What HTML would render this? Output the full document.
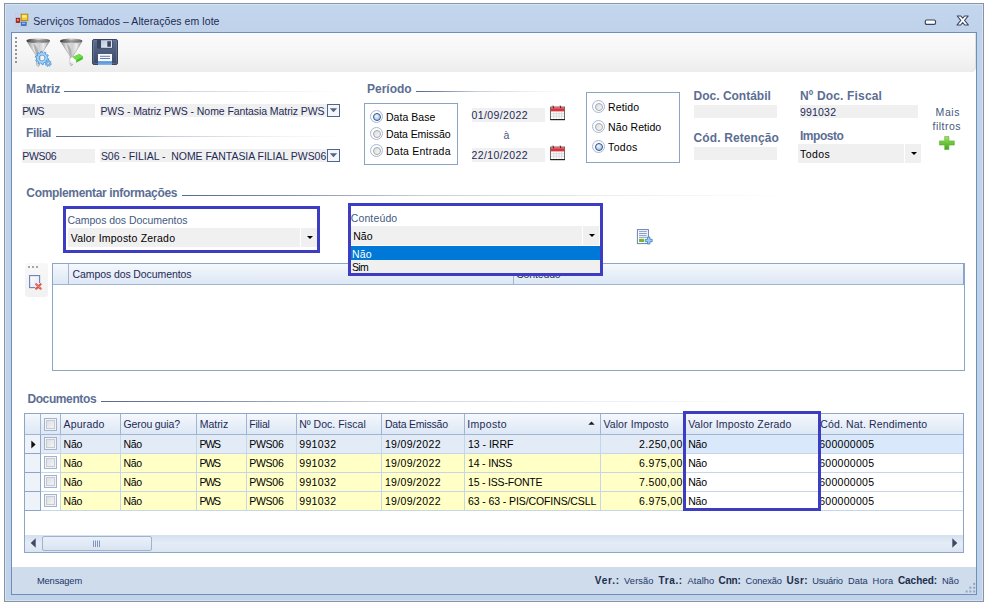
<!DOCTYPE html>
<html lang="pt-BR">
<head>
<meta charset="utf-8">
<title>Serviços Tomados – Alterações em lote</title>
<style>
html,body{margin:0;padding:0;}
body{width:986px;height:610px;background:#fff;position:relative;overflow:hidden;
 font-family:"Liberation Sans",sans-serif;font-size:10.5px;color:#000;}
div,span,svg{position:absolute;box-sizing:border-box;}
span{white-space:nowrap;line-height:14px;height:14px;}
.win{left:4px;top:3px;width:980px;height:599px;background:linear-gradient(#c4d6ed,#bfd2ea 28px,#c1d3eb 29px);border:1px solid #8893a5;box-shadow:inset 1px 1px 0 #d6e3f3,inset -1px -1px 0 #d6e3f3;}
.client{left:11px;top:32px;width:966px;height:563px;background:#fff;border:1px solid #6f8db8;}
.tb{left:12px;top:33px;width:964px;height:39px;background:linear-gradient(#fbfbfb,#f6f6f6 50%,#ededed);border-radius:0 0 5px 0;box-shadow:inset -1px 0 0 #e0e0e0;}
.hd{font-weight:bold;color:#5c6e93;font-size:12px;}
.ln{height:1px;background:linear-gradient(90deg,#566a8c,rgba(86,106,140,0.8) 15%,rgba(86,106,140,0.32) 40%,rgba(86,106,140,0.12) 70%,rgba(86,106,140,0));}
.fld{background:#f0f0f0;}
.lbl{color:#44597f;}
.gb{border:1px solid #8ba3c4;background:#fff;}
.rad{width:13px;height:13px;border-radius:50%;border:1px solid #a4b9d8;background:#fdfdfe;}
.rad::after{content:"";position:absolute;left:1.5px;top:1.5px;width:8px;height:8px;border-radius:50%;border:1px solid #a6a8ac;background:linear-gradient(135deg,#dcdcdc,#f9f9f9);box-sizing:border-box;}
.rad.on::after{border:1.5px solid #35518a;background:radial-gradient(circle at 40% 35%,#f2f7fd,#8db3e4);}
.hl{border:3px solid #3d3dc3;}
.arr{width:0;height:0;border-left:3px solid transparent;border-right:3px solid transparent;border-top:3px solid #000;}
.grid{border:1px solid #8da5c6;background:#fff;}
.gh{background:linear-gradient(#f6f9fd,#e9f0f9 45%,#dde8f5);border-bottom:1px solid #9fb5d3;}
.vs{width:1px;background:#a9bddb;}
.hs{height:1px;background:#c5d5ea;}
.st{font-size:9.3px;color:#213567;}
.st b{font-weight:bold;color:#1c2c4a;font-size:10px;}
</style>
</head>
<body>
<div class="win"></div>
<div class="client"></div>
<div class="tb"></div>

<!-- title -->
<span id="title" style="left:33.3px;top:14px;font-size:10.5px;color:#1e2a55;letter-spacing:0.07px;">Serviços Tomados – Alterações em lote</span>


<!-- title icon -->
<svg style="left:15px;top:13px" width="14" height="14" viewBox="0 0 14 14">
 <path d="M0.5 0.5 H13.5 V13.5 H0.5 Z M5.5 0.5 V13.5 M0.5 9.5 H13.5 M3 9.5 V13.5" fill="none" stroke="#c4c8cf" stroke-width="0.7"/>
 <rect x="1.2" y="5.2" width="3.6" height="4.4" fill="#c3241c" stroke="#8a1a14" stroke-width="0.7"/>
 <rect x="2.3" y="6" width="1.2" height="2" fill="#f5b5ad"/>
 <rect x="6.2" y="1.2" width="6.6" height="6.3" fill="#f7c91d" stroke="#b5860a" stroke-width="0.9"/>
 <rect x="7.2" y="2.2" width="4.4" height="2.4" fill="#fdeb95"/>
 <rect x="6.2" y="9" width="5" height="3.6" fill="#3b7bdc" stroke="#2a5cb0" stroke-width="0.6"/>
 <rect x="7" y="9.7" width="3.2" height="1.2" fill="#9ec2f5"/>
</svg>
<!-- window buttons -->
<svg style="left:924px;top:19px" width="13" height="7" viewBox="0 0 13 7"><rect x="1.3" y="1" width="10.2" height="4.4" rx="1.4" fill="#fff" stroke="#3b4561" stroke-width="1.2"/></svg>
<svg style="left:956px;top:15px" width="14" height="12" viewBox="0 0 14 12"><path d="M1.2 1 L4.8 1 L6.7 3.2 L8.6 1 L12.2 1 L8.6 5.3 L12.4 10 L8.7 10 L6.7 7.5 L4.7 10 L1 10 L4.8 5.3 Z" fill="#fff" stroke="#3b4561" stroke-width="1.1" stroke-linejoin="round"/></svg>

<!-- toolbar icons -->
<svg style="left:12px;top:33px" width="112" height="38" viewBox="12 33 112 38">
 <defs>
  <linearGradient id="fg" x1="0" x2="1"><stop offset="0" stop-color="#8f8f8f"/><stop offset="0.3" stop-color="#e2e2e2"/><stop offset="0.55" stop-color="#cfcfcf"/><stop offset="0.75" stop-color="#ececec"/><stop offset="1" stop-color="#909090"/></linearGradient>
  <linearGradient id="fe" x1="0" x2="1"><stop offset="0" stop-color="#2f2f2f"/><stop offset="0.3" stop-color="#8a8a8a"/><stop offset="0.5" stop-color="#cfcfcf"/><stop offset="0.8" stop-color="#8e8e8e"/><stop offset="1" stop-color="#555"/></linearGradient>
  <linearGradient id="sv" x1="0" y1="0" x2="0" y2="1"><stop offset="0" stop-color="#5d6c8c"/><stop offset="1" stop-color="#3d4a69"/></linearGradient>
  <linearGradient id="sh" x1="0" y1="0" x2="1" y2="1"><stop offset="0" stop-color="#b9c5dc"/><stop offset="1" stop-color="#eef2f8"/></linearGradient>
  <linearGradient id="sb" x1="0" y1="0" x2="0" y2="1"><stop offset="0" stop-color="#4a8ad2"/><stop offset="1" stop-color="#77b4ec"/></linearGradient>
 </defs>
 <g fill="#90969e"><rect x="15" y="37" width="2" height="2"/><rect x="15" y="41" width="2" height="2"/><rect x="15" y="45" width="2" height="2"/><rect x="15" y="49" width="2" height="2"/><rect x="15" y="53" width="2" height="2"/><rect x="15" y="57" width="2" height="2"/><rect x="15" y="61" width="2" height="2"/></g>
 <!-- funnel 1 -->
 <path d="M27 41.5 L49.5 41.5 L40 56 L40 63 Q39.5 66.5 38 66.5 Q36.5 66 36.5 63 L36.5 56 Z" fill="url(#fg)" stroke="#8a8a8a" stroke-width="0.5"/>
 <path d="M33 43 Q39 47 38.5 57 L37 57 Z" fill="#a5a5a5" opacity="0.8"/>
 <ellipse cx="38.2" cy="40.8" rx="11.9" ry="2.4" fill="url(#fe)"/>
 <ellipse cx="38.4" cy="41.3" rx="9" ry="1.2" fill="#6b6b6b" opacity="0.55"/>
 <path d="M47.10 58.00 L48.66 58.76 L48.37 60.07 L46.64 60.11 L46.13 61.00 L46.94 62.52 L45.94 63.42 L44.51 62.44 L43.58 62.85 L43.34 64.57 L42.00 64.70 L41.42 63.07 L40.42 62.85 L39.22 64.10 L38.06 63.42 L38.56 61.76 L37.87 61.00 L36.17 61.30 L35.63 60.07 L37.00 59.02 L36.90 58.00 L35.34 57.24 L35.63 55.93 L37.36 55.89 L37.87 55.00 L37.06 53.48 L38.06 52.58 L39.49 53.56 L40.42 53.15 L40.66 51.43 L42.00 51.30 L42.58 52.93 L43.58 53.15 L44.78 51.90 L45.94 52.58 L45.44 54.24 L46.13 55.00 L47.83 54.70 L48.37 55.93 L47.00 56.98 Z M44.90 58.00 A2.90 2.90 0 1 0 39.10 58.00 A2.90 2.90 0 1 0 44.90 58.00 Z" fill="#8fc7f5" fill-rule="evenodd" stroke="#3f8ad0" stroke-width="0.7"/>
 <circle cx="42" cy="58" r="4.2" fill="none" stroke="#b5dbfa" stroke-width="0.9"/>
 <path d="M50.50 63.30 L51.37 63.75 L51.16 64.52 L50.18 64.47 L49.83 64.93 L50.12 65.86 L49.42 66.26 L48.77 65.53 L48.20 65.60 L47.75 66.47 L46.98 66.26 L47.03 65.28 L46.57 64.93 L45.64 65.22 L45.24 64.52 L45.97 63.87 L45.90 63.30 L45.03 62.85 L45.24 62.08 L46.22 62.13 L46.57 61.67 L46.28 60.74 L46.98 60.34 L47.63 61.07 L48.20 61.00 L48.65 60.13 L49.42 60.34 L49.37 61.32 L49.83 61.67 L50.76 61.38 L51.16 62.08 L50.43 62.73 Z M49.40 63.30 A1.20 1.20 0 1 0 47.00 63.30 A1.20 1.20 0 1 0 49.40 63.30 Z" fill="#8fc7f5" fill-rule="evenodd" stroke="#3f8ad0" stroke-width="0.6"/>
 <!-- funnel 2 -->
 <path d="M60.5 41.5 L82 41.5 L73 56 L73 62.5 Q72.5 65.8 71.2 65.8 Q70 65.4 70 62.5 L70 56 Z" fill="url(#fg)" stroke="#8a8a8a" stroke-width="0.5"/>
 <path d="M66.5 43 Q72 47 71.7 57 L70.3 57 Z" fill="#a5a5a5" opacity="0.8"/>
 <ellipse cx="71.2" cy="40.9" rx="11.3" ry="2.4" fill="url(#fe)"/>
 <ellipse cx="71.4" cy="41.4" rx="8.5" ry="1.2" fill="#6b6b6b" opacity="0.55"/>
 <path d="M72.2 57.3 L79.3 53.9 L83 56.5 L82.7 59.2 L76.1 62.8 L76.1 60.2 Z" fill="#45c028"/>
 <path d="M72.2 57.3 L79.3 53.9 L83 56.5 L76.1 60.2 Z" fill="#6fdc4a"/>
 <path d="M70 59.8 L72.2 57.3 L76.1 60.2 L76.1 62.8 L73.3 64.3 L70 62.2 Z" fill="#f1f1f1"/>
 <path d="M70 59.8 L72.2 57.3 L76.1 60.2 L73.6 61.8 Z" fill="#fff"/>
 <!-- save -->
 <rect x="92.5" y="39.5" width="25" height="25" rx="1.6" fill="url(#sv)" stroke="#3a4560" stroke-width="1"/>
 <rect x="93.5" y="40.5" width="23" height="23" rx="1" fill="none" stroke="#7584a3" stroke-width="0.7" opacity="0.7"/>
 <rect x="97" y="39.5" width="15.5" height="9" fill="#3a4562"/>
 <rect x="101" y="40.2" width="11" height="7.6" fill="url(#sh)"/>
 <rect x="107.3" y="41.2" width="3.6" height="5.6" fill="#3a4562"/>
 <rect x="98" y="54" width="14" height="10.6" fill="#f6f8fc"/>
 <rect x="98" y="61.2" width="14" height="3.6" fill="url(#sb)"/>
 <rect x="100" y="55.8" width="10" height="1" fill="#6a78b0"/>
 <rect x="100" y="58" width="10" height="1" fill="#6a78b0"/>
</svg>

<!-- ===== filters ===== -->
<span class="hd" id="h_matriz" style="left:26.1px;top:82px;letter-spacing:-0.11px;">Matriz</span>
<div class="ln" style="left:64px;top:91px;width:280px;"></div>
<div class="fld" style="left:22px;top:104px;width:73px;height:14px;"></div>
<span id="t_pws" style="left:22.3px;top:104px;color:#1e2a55;letter-spacing:-0.91px;">PWS</span>
<div class="fld" style="left:100px;top:104px;width:227px;height:13px;"></div>
<span id="t_mat" style="left:100.4px;top:104px;color:#1e2a55;letter-spacing:-0.08px;">PWS - Matriz PWS - Nome Fantasia Matriz PWS</span>
<svg style="left:327px;top:104px" width="13" height="13" viewBox="0 0 13 13"><rect x="0.5" y="0.5" width="12" height="12" fill="#f3f6fa" stroke="#50658a"/><path d="M2.8 4.3 L10.2 4.3 L6.5 8.3 Z" fill="#55657f"/></svg>

<span class="hd" id="h_filial" style="left:26.1px;top:126px;letter-spacing:-0.43px;">Filial</span>
<div class="ln" style="left:56px;top:136px;width:288px;"></div>
<div class="fld" style="left:22px;top:149px;width:73px;height:14px;"></div>
<span id="t_pws06" style="left:22.3px;top:149px;color:#1e2a55;letter-spacing:-0.33px;">PWS06</span>
<div class="fld" style="left:100px;top:149px;width:227px;height:13px;"></div>
<span id="t_fil" style="left:100.9px;top:149px;color:#1e2a55;white-space:pre;letter-spacing:-0.03px;">S06 - FILIAL -  NOME FANTASIA FILIAL PWS06</span>
<svg style="left:327px;top:149px" width="13" height="13" viewBox="0 0 13 13"><rect x="0.5" y="0.5" width="12" height="12" fill="#f3f6fa" stroke="#50658a"/><path d="M2.8 4.3 L10.2 4.3 L6.5 8.3 Z" fill="#55657f"/></svg>

<span class="hd" id="h_per" style="left:367px;top:82px;letter-spacing:0px;">Período</span>
<div class="ln" style="left:416px;top:91px;width:155px;"></div>
<div class="gb" style="left:364px;top:103px;width:94px;height:62px;"></div>
<div class="rad on" style="left:370px;top:110px;"></div>
<div class="rad" style="left:370px;top:127px;"></div>
<div class="rad" style="left:370px;top:144px;"></div>
<span id="r_base" style="left:386px;top:110px;letter-spacing:0.03px;">Data Base</span>
<span id="r_emis" style="left:386px;top:127px;letter-spacing:-0.08px;">Data Emissão</span>
<span id="r_entr" style="left:386px;top:144px;letter-spacing:0.24px;">Data Entrada</span>

<div class="fld" style="left:472px;top:108px;width:73px;height:14px;"></div>
<span id="d1" style="left:471.6px;top:108px;color:#1e2a55;letter-spacing:0.37px;">01/09/2022</span>
<span id="d_a" style="left:503.6px;top:128px;color:#44597f;letter-spacing:0.36px;">à</span>
<div class="fld" style="left:472px;top:148px;width:73px;height:14px;"></div>
<span id="d2" style="left:471.6px;top:148px;color:#1e2a55;letter-spacing:0.37px;">22/10/2022</span>

<svg class="cal" style="left:550px;top:105px" width="16" height="16" viewBox="0 0 16 16"><rect x="0.6" y="2" width="14" height="12.6" fill="#fdfdfd" stroke="#4a4a4a" stroke-width="0.8"/><rect x="0.3" y="14" width="14.6" height="1.2" fill="#222"/><rect x="1" y="2.2" width="13.2" height="4.2" fill="#d8323c"/><rect x="1" y="2.2" width="13.2" height="1.5" fill="#ea6a70"/><g stroke="#c9c9c9" stroke-width="0.6"><path d="M1.2 8.7 H14 M1.2 11.2 H14 M3.8 6.6 V13.8 M6.4 6.6 V13.8 M9 6.6 V13.8 M11.6 6.6 V13.8"/></g><g stroke="#3a1a1a" stroke-width="0.9"><path d="M3 0.6 L3.6 3.2 M10.2 0.6 L10.8 3.2"/></g></svg>
<svg class="cal" style="left:550px;top:145px" width="16" height="16" viewBox="0 0 16 16"><rect x="0.6" y="2" width="14" height="12.6" fill="#fdfdfd" stroke="#4a4a4a" stroke-width="0.8"/><rect x="0.3" y="14" width="14.6" height="1.2" fill="#222"/><rect x="1" y="2.2" width="13.2" height="4.2" fill="#d8323c"/><rect x="1" y="2.2" width="13.2" height="1.5" fill="#ea6a70"/><g stroke="#c9c9c9" stroke-width="0.6"><path d="M1.2 8.7 H14 M1.2 11.2 H14 M3.8 6.6 V13.8 M6.4 6.6 V13.8 M9 6.6 V13.8 M11.6 6.6 V13.8"/></g><g stroke="#3a1a1a" stroke-width="0.9"><path d="M3 0.6 L3.6 3.2 M10.2 0.6 L10.8 3.2"/></g></svg>

<div class="gb" style="left:586px;top:92px;width:94px;height:71px;"></div>
<div class="rad" style="left:592px;top:100px;"></div>
<div class="rad" style="left:592px;top:120px;"></div>
<div class="rad on" style="left:592px;top:140px;"></div>
<span id="r_ret" style="left:608.1px;top:100px;letter-spacing:0.13px;">Retido</span>
<span id="r_nret" style="left:608.1px;top:120px;letter-spacing:0.06px;">Não Retido</span>
<span id="r_tod" style="left:608.1px;top:140px;letter-spacing:0.29px;">Todos</span>

<span class="hd" id="h_doc" style="left:693.6px;top:89px;letter-spacing:-0.01px;">Doc. Contábil</span>
<div class="fld" style="left:694px;top:105px;width:83px;height:13px;"></div>
<span class="hd" id="h_cod" style="left:693.6px;top:131px;letter-spacing:0.11px;">Cód. Retenção</span>
<div class="fld" style="left:694px;top:147px;width:83px;height:13px;"></div>

<span class="hd" id="h_ndoc" style="left:800px;top:89px;letter-spacing:0.17px;">Nº Doc. Fiscal</span>
<div class="fld" style="left:800px;top:105px;width:118px;height:13px;"></div>
<span id="t_ndoc" style="left:800px;top:104.5px;color:#1e2a55;letter-spacing:0.19px;">991032</span>
<span class="hd" id="h_imp" style="left:800px;top:129px;letter-spacing:-0.48px;">Imposto</span>
<div class="fld" style="left:798px;top:144px;width:106px;height:19px;"></div>
<div class="fld" style="left:905px;top:144px;width:16px;height:19px;"></div>
<span id="t_todos" style="left:800px;top:147px;letter-spacing:0.44px;">Todos</span>
<div class="arr" style="left:911px;top:152px;"></div>

<span class="lbl" id="mais1" style="left:935.6px;top:104.5px;letter-spacing:0.58px;">Mais</span>
<span class="lbl" id="mais2" style="left:932.6px;top:119px;letter-spacing:0.47px;">filtros</span>
<svg style="left:939px;top:136px" width="16" height="14" viewBox="0 0 16 14"><defs><linearGradient id="pl" x1="0" y1="0" x2="0" y2="1"><stop offset="0" stop-color="#a9e274"/><stop offset="0.5" stop-color="#6cc53a"/><stop offset="1" stop-color="#44a51c"/></linearGradient></defs><path d="M5.7 0.4 H9.9 V4.9 H15.3 V9 H9.9 V13.6 H5.7 V9 H0.4 V4.9 H5.7 Z" fill="url(#pl)" stroke="#58ad34" stroke-width="0.6"/></svg>


<!-- ===== complementar ===== -->
<span class="hd" id="h_comp" style="left:26.3px;top:186px;letter-spacing:-0.33px;">Complementar informações</span>
<div class="ln" style="left:182px;top:195px;width:605px;"></div>

<div class="hl" style="left:63px;top:206px;width:257px;height:47px;"></div>
<span class="lbl" id="l_campos" style="left:67.5px;top:212.5px;letter-spacing:-0.04px;">Campos dos Documentos</span>
<div class="fld" style="left:68px;top:228px;width:232px;height:19px;"></div>
<div class="fld" style="left:301px;top:228px;width:16px;height:19px;"></div>
<span id="t_viz" style="left:70.8px;top:231px;letter-spacing:0.21px;">Valor Imposto Zerado</span>
<div class="arr" style="left:307px;top:236px;"></div>

<!-- side toolbar -->
<div style="left:25px;top:263px;width:23px;height:34px;background:linear-gradient(#f8f8f8,#f1f1f1);border-radius:3px;"></div>
<svg style="left:28px;top:266px" width="10" height="2" viewBox="0 0 10 2"><g fill="#a6a6a6"><rect x="0" y="0" width="2" height="2"/><rect x="4" y="0" width="2" height="2"/><rect x="8" y="0" width="2" height="2"/></g></svg>
<svg style="left:29px;top:275px" width="15" height="16" viewBox="0 0 15 16"><defs><linearGradient id="pg" x1="0" y1="0" x2="1" y2="1"><stop offset="0" stop-color="#fff"/><stop offset="1" stop-color="#dfe5f5"/></linearGradient></defs><rect x="0.6" y="0.6" width="10" height="12" fill="url(#pg)" stroke="#6b7fb8" stroke-width="1.1"/><rect x="6" y="8" width="7" height="7" fill="#f5f5f5"/><g stroke="#dc5a50" stroke-width="2.3" stroke-linecap="round"><path d="M7.2 9.2 L11.6 13.6 M11.6 9.2 L7.2 13.6"/></g><g stroke="#f0988f" stroke-width="0.8" stroke-linecap="round"><path d="M7.2 9.0 L11.4 13.2"/></g></svg>

<!-- grid 1 -->
<div class="grid" style="left:52px;top:263px;width:913px;height:108px;"></div>
<div class="gh" style="left:53px;top:264px;width:911px;height:21px;"></div>
<div class="vs" style="left:68px;top:264px;height:21px;background:#9fb5d3;"></div>
<div class="vs" style="left:513px;top:264px;height:21px;background:#9fb5d3;"></div>
<div class="vs" style="left:963px;top:264px;height:21px;background:#8da5c6;"></div>
<span id="g1a" style="left:72.5px;top:267px;color:#1e2a55;letter-spacing:-0.09px;">Campos dos Documentos</span>
<span id="g1b" style="left:516.2px;top:267px;color:#1e2a55;letter-spacing:-0.15px;">Conteúdo</span>

<!-- conteudo combo (open) -->
<div style="left:348px;top:203px;width:255px;height:73px;background:#fff;"></div>
<span class="lbl" id="l_cont" style="left:350.7px;top:210.7px;letter-spacing:0.14px;">Conteúdo</span>
<div class="fld" style="left:351px;top:226px;width:231px;height:19px;"></div>
<div class="fld" style="left:583px;top:226px;width:16px;height:19px;"></div>
<span id="t_nao" style="left:353.2px;top:229px;letter-spacing:0.02px;">Não</span>
<div class="arr" style="left:588.5px;top:234px;"></div>
<div style="left:351px;top:246px;width:249px;height:14px;background:#0078d7;"></div>
<div style="left:351px;top:260px;width:249px;height:13px;background:#f0f0f0;"></div>
<span id="li_nao" style="left:351.9px;top:247px;color:#fff;letter-spacing:0.17px;">Não</span>
<span id="li_sim" style="left:351.9px;top:260px;letter-spacing:-0.65px;">Sim</span>
<div class="hl" style="left:348px;top:203px;width:255px;height:73px;"></div>

<svg style="left:636px;top:228px" width="18" height="18" viewBox="636 228 18 18"><rect x="637.4" y="229.6" width="11" height="14" fill="#fbfcff" stroke="#6a7fb6" stroke-width="1"/><g stroke="#7f92c4" stroke-width="0.9"><path d="M639 231.6 H646.8 M639 233.5 H646.8 M639 235.4 H646.8 M639 237.3 H646.8"/></g><rect x="639" y="238.8" width="5" height="3.2" fill="#76b82a"/><path d="M647.5 237 H649.9 V239.3 H652.2 V241.7 H649.9 V244 H647.5 V241.7 H645.2 V239.3 H647.5 Z" fill="#9dcdf0" stroke="#3f7fbd" stroke-width="0.8" stroke-linejoin="round"/></svg>

<!-- ===== documentos ===== -->
<span class="hd" id="h_docs" style="left:27.4px;top:392px;letter-spacing:-0.39px;">Documentos</span>
<div class="ln" style="left:101px;top:401px;width:685px;"></div>
<div class="grid" style="left:24px;top:413px;width:940px;height:140px;"></div>
<div class="gh" style="left:25px;top:414px;width:938px;height:21px;"></div>
<div style="left:25px;top:435px;width:16px;height:75px;background:#eef3fa;"></div>
<div style="left:41px;top:435px;width:922px;height:18px;background:#e3ebf6;"></div>
<div style="left:685px;top:435px;width:278px;height:18px;background:#d9e8fb;"></div>
<div style="left:61px;top:453px;width:624px;height:57px;background:#ffffc6;"></div>
<div style="left:41px;top:453px;width:20px;height:57px;background:#fff;"></div>
<div class="hs" style="left:41px;top:453px;width:922px;"></div>
<div style="left:25px;top:453px;width:16px;height:1px;background:#8da5c6;"></div>
<div class="hs" style="left:41px;top:472px;width:922px;"></div>
<div style="left:25px;top:472px;width:16px;height:1px;background:#8da5c6;"></div>
<div class="hs" style="left:41px;top:491px;width:922px;"></div>
<div style="left:25px;top:491px;width:16px;height:1px;background:#8da5c6;"></div>
<div class="hs" style="left:41px;top:510px;width:922px;"></div>
<div style="left:25px;top:510px;width:16px;height:1px;background:#8da5c6;"></div>
<div class="vs" style="left:40px;top:414px;height:21px;background:#9fb5d3;"></div>
<div class="vs" style="left:40px;top:435px;height:75px;background:#c5d5ea;"></div>
<div class="vs" style="left:60px;top:414px;height:21px;background:#9fb5d3;"></div>
<div class="vs" style="left:60px;top:435px;height:75px;background:#c5d5ea;"></div>
<div class="vs" style="left:120px;top:414px;height:21px;background:#9fb5d3;"></div>
<div class="vs" style="left:120px;top:435px;height:75px;background:#c5d5ea;"></div>
<div class="vs" style="left:196px;top:414px;height:21px;background:#9fb5d3;"></div>
<div class="vs" style="left:196px;top:435px;height:75px;background:#c5d5ea;"></div>
<div class="vs" style="left:246px;top:414px;height:21px;background:#9fb5d3;"></div>
<div class="vs" style="left:246px;top:435px;height:75px;background:#c5d5ea;"></div>
<div class="vs" style="left:296px;top:414px;height:21px;background:#9fb5d3;"></div>
<div class="vs" style="left:296px;top:435px;height:75px;background:#c5d5ea;"></div>
<div class="vs" style="left:381px;top:414px;height:21px;background:#9fb5d3;"></div>
<div class="vs" style="left:381px;top:435px;height:75px;background:#c5d5ea;"></div>
<div class="vs" style="left:464px;top:414px;height:21px;background:#9fb5d3;"></div>
<div class="vs" style="left:464px;top:435px;height:75px;background:#c5d5ea;"></div>
<div class="vs" style="left:600px;top:414px;height:21px;background:#9fb5d3;"></div>
<div class="vs" style="left:600px;top:435px;height:75px;background:#c5d5ea;"></div>
<div class="vs" style="left:684px;top:414px;height:21px;background:#9fb5d3;"></div>
<div class="vs" style="left:684px;top:435px;height:75px;background:#c5d5ea;"></div>
<div class="vs" style="left:818px;top:414px;height:21px;background:#9fb5d3;"></div>
<div class="vs" style="left:818px;top:435px;height:75px;background:#c5d5ea;"></div>
<div class="vs" style="left:40px;top:435px;height:75px;background:#8da5c6;"></div>
<span id="gh0" style="left:63.5px;top:417px;color:#1e2a55;letter-spacing:0.2px;">Apurado</span>
<span id="gh1" style="left:123.6px;top:417px;color:#1e2a55;letter-spacing:-0.14px;">Gerou guia?</span>
<span id="gh2" style="left:199.7px;top:417px;color:#1e2a55;letter-spacing:-0.02px;">Matriz</span>
<span id="gh3" style="left:249.2px;top:417px;color:#1e2a55;letter-spacing:-0.18px;">Filial</span>
<span id="gh4" style="left:299.2px;top:417px;color:#1e2a55;letter-spacing:0.02px;">Nº Doc. Fiscal</span>
<span id="gh5" style="left:384.9px;top:417px;color:#1e2a55;letter-spacing:-0.2px;">Data Emissão</span>
<span id="gh6" style="left:467.2px;top:417px;color:#1e2a55;letter-spacing:0.34px;">Imposto</span>
<span id="gh7" style="left:603.4px;top:417px;color:#1e2a55;letter-spacing:0.1px;">Valor Imposto</span>
<span id="gh8" style="left:688.2px;top:417px;color:#1e2a55;letter-spacing:0.16px;">Valor Imposto Zerado</span>
<span id="gh9" style="left:820.2px;top:417px;color:#1e2a55;letter-spacing:0.16px;">Cód. Nat. Rendimento</span>
<svg style="left:588px;top:421px" width="7" height="4" viewBox="0 0 7 4"><path d="M0.3 3.7 L3.5 0.4 L6.7 3.7 Z" fill="#1e1e1e"/></svg>
<div style="left:44px;top:418px;width:13px;height:13px;border:1px solid #a3b3cb;background:#f1f3f6;"><div style="left:1px;top:1px;width:9px;height:9px;border:1px solid #c6cbd3;background:linear-gradient(135deg,#dcdfe4,#f2f3f5);"></div></div>
<div style="left:44px;top:437px;width:13px;height:13px;border:1px solid #a3b3cb;background:#f1f3f6;"><div style="left:1px;top:1px;width:9px;height:9px;border:1px solid #c6cbd3;background:linear-gradient(135deg,#dcdfe4,#f2f3f5);"></div></div>
<span id="c0_0" style="left:63.5px;top:437px;letter-spacing:-0.18px;">Não</span>
<span id="c0_1" style="left:123.6px;top:437px;letter-spacing:-0.43px;">Não</span>
<span id="c0_2" style="left:199.6px;top:437px;letter-spacing:-1.21px;">PWS</span>
<span id="c0_3" style="left:249.2px;top:437px;letter-spacing:-0.25px;">PWS06</span>
<span id="c0_4" style="left:299.2px;top:437px;letter-spacing:0.35px;">991032</span>
<span id="c0_5" style="left:384.9px;top:437px;letter-spacing:0.34px;">19/09/2022</span>
<span id="c0_6" style="left:468px;top:437px;letter-spacing:-0.01px;">13 - IRRF</span>
<span id="c0_v" style="right:303.4px;top:437px;letter-spacing:0.33px;">2.250,00</span>
<span id="c0_z" style="left:688.2px;top:437px;letter-spacing:-0.18px;">Não</span>
<span id="c0_n" style="left:819.2px;top:437px;letter-spacing:0.28px;">600000005</span>
<div style="left:44px;top:456px;width:13px;height:13px;border:1px solid #a3b3cb;background:#f1f3f6;"><div style="left:1px;top:1px;width:9px;height:9px;border:1px solid #c6cbd3;background:linear-gradient(135deg,#dcdfe4,#f2f3f5);"></div></div>
<span id="c1_0" style="left:63.5px;top:456px;letter-spacing:-0.18px;">Não</span>
<span id="c1_1" style="left:123.6px;top:456px;letter-spacing:-0.43px;">Não</span>
<span id="c1_2" style="left:199.6px;top:456px;letter-spacing:-1.21px;">PWS</span>
<span id="c1_3" style="left:249.2px;top:456px;letter-spacing:-0.25px;">PWS06</span>
<span id="c1_4" style="left:299.2px;top:456px;letter-spacing:0.35px;">991032</span>
<span id="c1_5" style="left:384.9px;top:456px;letter-spacing:0.34px;">19/09/2022</span>
<span id="c1_6" style="left:468px;top:456px;letter-spacing:-0.17px;">14 - INSS</span>
<span id="c1_v" style="right:303.4px;top:456px;letter-spacing:0.33px;">6.975,00</span>
<span id="c1_z" style="left:688.2px;top:456px;letter-spacing:-0.18px;">Não</span>
<span id="c1_n" style="left:819.2px;top:456px;letter-spacing:0.28px;">600000005</span>
<div style="left:44px;top:475px;width:13px;height:13px;border:1px solid #a3b3cb;background:#f1f3f6;"><div style="left:1px;top:1px;width:9px;height:9px;border:1px solid #c6cbd3;background:linear-gradient(135deg,#dcdfe4,#f2f3f5);"></div></div>
<span id="c2_0" style="left:63.5px;top:475px;letter-spacing:-0.18px;">Não</span>
<span id="c2_1" style="left:123.6px;top:475px;letter-spacing:-0.43px;">Não</span>
<span id="c2_2" style="left:199.6px;top:475px;letter-spacing:-1.21px;">PWS</span>
<span id="c2_3" style="left:249.2px;top:475px;letter-spacing:-0.25px;">PWS06</span>
<span id="c2_4" style="left:299.2px;top:475px;letter-spacing:0.35px;">991032</span>
<span id="c2_5" style="left:384.9px;top:475px;letter-spacing:0.34px;">19/09/2022</span>
<span id="c2_6" style="left:468px;top:475px;letter-spacing:-0.19px;">15 - ISS-FONTE</span>
<span id="c2_v" style="right:303.4px;top:475px;letter-spacing:0.33px;">7.500,00</span>
<span id="c2_z" style="left:688.2px;top:475px;letter-spacing:-0.18px;">Não</span>
<span id="c2_n" style="left:819.2px;top:475px;letter-spacing:0.28px;">600000005</span>
<div style="left:44px;top:494px;width:13px;height:13px;border:1px solid #a3b3cb;background:#f1f3f6;"><div style="left:1px;top:1px;width:9px;height:9px;border:1px solid #c6cbd3;background:linear-gradient(135deg,#dcdfe4,#f2f3f5);"></div></div>
<span id="c3_0" style="left:63.5px;top:494px;letter-spacing:-0.18px;">Não</span>
<span id="c3_1" style="left:123.6px;top:494px;letter-spacing:-0.43px;">Não</span>
<span id="c3_2" style="left:199.6px;top:494px;letter-spacing:-1.21px;">PWS</span>
<span id="c3_3" style="left:249.2px;top:494px;letter-spacing:-0.25px;">PWS06</span>
<span id="c3_4" style="left:299.2px;top:494px;letter-spacing:0.35px;">991032</span>
<span id="c3_5" style="left:384.9px;top:494px;letter-spacing:0.34px;">19/09/2022</span>
<span id="c3_6" style="left:468px;top:494px;letter-spacing:-0.1px;">63 - 63 - PIS/COFINS/CSLL</span>
<span id="c3_v" style="right:303.4px;top:494px;letter-spacing:0.33px;">6.975,00</span>
<span id="c3_z" style="left:688.2px;top:494px;letter-spacing:-0.18px;">Não</span>
<span id="c3_n" style="left:819.2px;top:494px;letter-spacing:0.28px;">600000005</span>
<svg style="left:31px;top:440px" width="5" height="9" viewBox="0 0 5 9"><path d="M0.3 0.4 L4.6 4.5 L0.3 8.6 Z" fill="#111"/></svg>
<div style="left:25px;top:535px;width:938px;height:17px;background:linear-gradient(#d5e0ef,#e4ecf6 50%,#dbe5f2);"></div>
<div style="left:42px;top:536px;width:110px;height:15px;border:1px solid #9db3d2;border-radius:2px;background:linear-gradient(#eaf0f8,#d9e4f2);"></div>
<svg style="left:30px;top:538px" width="6" height="10" viewBox="0 0 6 10"><path d="M5.7 0.3 L0.7 5 L5.7 9.7 Z" fill="#3c4a66"/></svg>
<svg style="left:952px;top:538px" width="6" height="10" viewBox="0 0 6 10"><path d="M0.3 0.3 L5.3 5 L0.3 9.7 Z" fill="#3c4a66"/></svg>
<svg style="left:93px;top:540px" width="8" height="7" viewBox="0 0 8 7"><path d="M0.5 0.5 V7 M2.5 0.5 V7 M4.5 0.5 V7 M6.5 0.5 V7" stroke="#7f97ba" stroke-width="1"/></svg>
<div class="hl" style="left:683px;top:411px;width:138px;height:100px;"></div>

<!-- status bar -->
<div style="left:12px;top:567px;width:964px;height:27px;background:#cfdcec;"></div>
<span class="st" id="msg" style="left:36.9px;top:574px;letter-spacing:-0.1px;">Mensagem</span>


<span class="st" id="s0" style="left:594.8px;top:574px;letter-spacing:0.81px;"><b>Ver.:</b></span>
<span class="st" id="s1" style="left:624.1px;top:574px;letter-spacing:0.09px;">Versão</span>
<span class="st" id="s2" style="left:658.6px;top:574px;letter-spacing:0.62px;"><b>Tra.:</b></span>
<span class="st" id="s3" style="left:687.5px;top:574px;letter-spacing:0.07px;">Atalho</span>
<span class="st" id="s4" style="left:718.6px;top:574px;letter-spacing:-0.19px;"><b>Cnn:</b></span>
<span class="st" id="s5" style="left:745.6px;top:574px;letter-spacing:-0.14px;">Conexão</span>
<span class="st" id="s6" style="left:786.6px;top:574px;letter-spacing:0.29px;"><b>Usr:</b></span>
<span class="st" id="s7" style="left:812.2px;top:574px;letter-spacing:-0.22px;">Usuário</span>
<span class="st" id="s8" style="left:848.1px;top:574px;letter-spacing:-0.05px;">Data</span>
<span class="st" id="s9" style="left:872.6px;top:574px;letter-spacing:0.15px;">Hora</span>
<span class="st" id="s10" style="left:897.9px;top:574px;letter-spacing:-0.03px;"><b>Cached:</b></span>
<span class="st" id="s11" style="left:941.9px;top:574px;letter-spacing:0.02px;">Não</span>
<svg style="left:965px;top:582px" width="11" height="11" viewBox="0 0 11 11"><g fill="#8fa3c2"><rect x="8.2" y="0.9" width="2" height="2"/><rect x="4.4" y="4.7" width="2" height="2"/><rect x="8.2" y="4.7" width="2" height="2"/><rect x="0.6" y="8.5" width="2" height="2"/><rect x="4.4" y="8.5" width="2" height="2"/><rect x="8.2" y="8.5" width="2" height="2"/></g></svg>
</body>
</html>
